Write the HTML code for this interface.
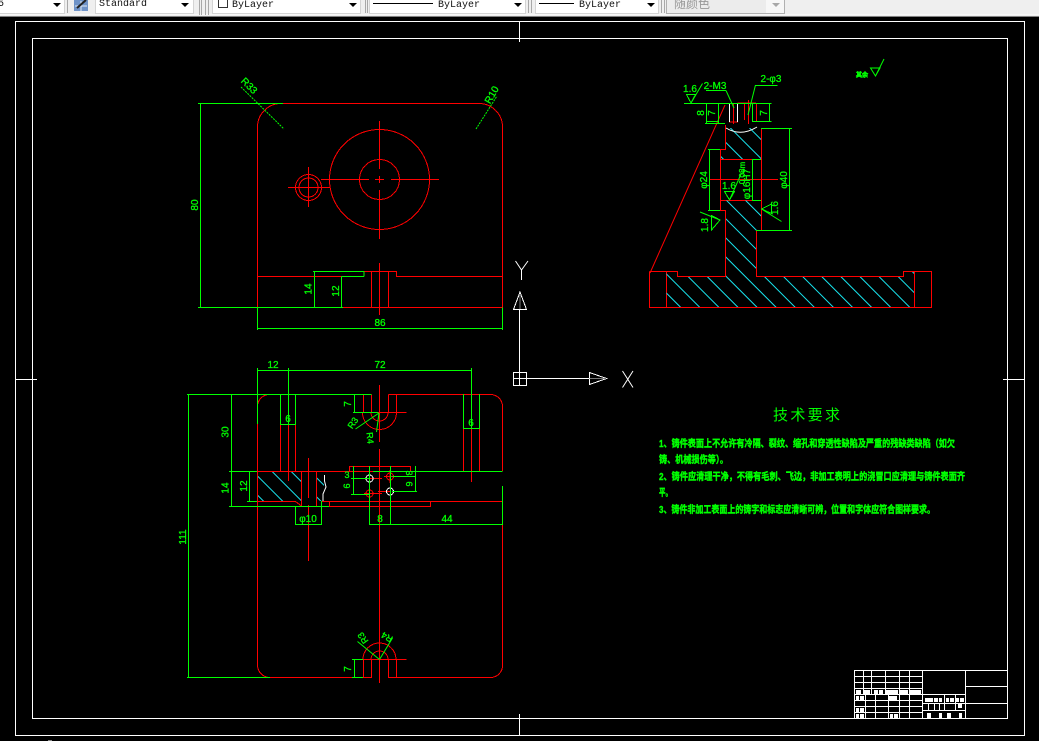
<!DOCTYPE html>
<html><head><meta charset="utf-8">
<style>
html,body{margin:0;padding:0;background:#000;width:1039px;height:741px;overflow:hidden}
svg{position:absolute;left:0;top:0}
</style></head><body>
<svg width="1039" height="741" viewBox="0 0 1039 741" xmlns="http://www.w3.org/2000/svg">
<defs>
<pattern id="h" width="13.5" height="13.5" patternUnits="userSpaceOnUse" patternTransform="rotate(45)">
<line x1="0" y1="6" x2="13.5" y2="6" stroke="#19e6f0" stroke-width="1"/>
</pattern>
</defs>
<!-- toolbar -->
<rect x="0" y="0" width="1039" height="17" fill="#efefef"/>
<rect x="0" y="14" width="1039" height="1" fill="#f7f7f7"/>
<rect x="0" y="16" width="1039" height="1" fill="#808080"/>
<g fill="#fff" stroke="#d4d4d4" shape-rendering="crispEdges">
<rect x="-2" y="-2" width="66.5" height="15.5"/>
<rect x="95.5" y="-2" width="98" height="15.5"/>
<rect x="212.5" y="-2" width="148" height="15.5"/>
<rect x="369.5" y="-2" width="156" height="15.5"/>
<rect x="535.5" y="-2" width="123" height="15.5"/>
<rect x="666.5" y="-2" width="118" height="15.5" fill="#ececec" stroke="#b0b0b0"/>
<rect x="766" y="-2" width="18" height="15" fill="#f7f7f7" stroke="none"/>
</g>
<g stroke="#a8a8a8" shape-rendering="crispEdges">
<path d="M67.5 0V13M199.5 0V15M201.5 0V15M205.5 0V15M208.5 0V15M365.5 0V13M367.5 0V13M528.5 0V13M531.5 0V13M661.5 0V13M664.5 0V13" fill="none"/>
</g>
<g fill="#000">
<path d="M53 3h8l-4 4zM181 3h8l-4 4zM349 3h8l-4 4zM514 3h8l-4 4zM647 3h8l-4 4z"/>
<path d="M772 3h8l-4 4z" fill="#a8a8a8"/>
</g>
<rect x="74" y="0" width="14" height="11" fill="#6f93c8"/>
<path d="M75 6h12M81 1v10" stroke="#dfe8f5" stroke-width="1"/>
<path d="M77 8L86 0" stroke="#222" stroke-width="2"/>
<rect x="218.5" y="-1" width="9" height="8.5" fill="#fff" stroke="#333" shape-rendering="crispEdges"/>
<path d="M373 3.5H433M539 3.5H574" stroke="#000" shape-rendering="crispEdges"/>
<g font-family="'Liberation Mono',monospace" font-size="10" fill="#111">
<text x="-2" y="6">5</text>
<text x="99" y="6">Standard</text>
<text x="232" y="7">ByLayer</text>
<text x="438" y="7">ByLayer</text>
<text x="579" y="7">ByLayer</text>
</g>
<text x="674" y="8" font-family="'Liberation Sans','Noto Sans CJK SC',sans-serif" font-size="12" fill="#999">随颜色</text>

<g fill="none" stroke-width="1" shape-rendering="crispEdges">
<!-- frames -->
<g stroke="#fff">
<path d="M15.5 21.5H1024.5V735.5H15.5Z"/>
<path d="M32.5 38.5H1007.5V718.5H32.5Z"/>
<path d="M519.5 21.5V42M519.5 714V735.5M15.5 379.5H37M1003 379.5H1024.5"/>
<!-- title block -->
<path d="M854.5 718.5V670.5H1007.5M922.5 670.5V718.5M965.5 670.5V718.5M965.5 686.5H1007.5M965.5 703.5H1007.5"/>
<path d="M854.5 676.5H922.5M854.5 682.5H922.5M854.5 688.5H922.5M854.5 694.5H965.5M854.5 700.5H922.5M854.5 706.5H922.5M854.5 712.5H922.5M922.5 703.5H965.5M922.5 710.5H965.5"/>
<path d="M863.5 670.5V694.5M871.5 670.5V694.5M885.5 670.5V694.5M899.5 670.5V718.5M909.5 670.5V718.5M865.5 694.5V718.5M875.5 694.5V718.5M888.5 694.5V718.5"/>
<path d="M944.5 694.5V710.5M955.5 694.5V710.5M928.5 703.5V710.5M934.5 703.5V710.5M939.5 703.5V710.5"/>
<!-- UCS -->
<path d="M513.5 372.5H526.5V385.5H513.5ZM519.5 372.5V385.5M513.5 378.5H589.5M519.5 372V309.5"/>
<path d="M513.5 309.5H526.5L520 292Z"/>
<path d="M589.5 372.5V384.5L606.5 378.5Z"/>
</g>
<path d="M515.5 261L521.5 270L528 261M521.5 270V280M622.5 371L633 387.5M633 371L622.5 387.5" stroke="#fff" shape-rendering="auto"/>
<path d="M589.5 378.5H606M520 295V309" stroke="#777"/>

<!-- TOP VIEW red -->
<g stroke="#f00">
<path d="M257.5 128V126.5A23.5 23.5 0 0 1 281 103.5H479A23.5 23.5 0 0 1 502.5 127V307.5H343M257.5 127V307.5"/>
<path d="M257.5 276.5H364M364 271.5H396.5V276.5H502.5M364 276.5V271.5"/>
<path d="M371.5 271.5V307.5M388.5 271.5V307.5M379.5 263V315"/>
<circle cx="379.5" cy="179.5" r="50"/>
<circle cx="379.5" cy="179.5" r="20"/>
<path d="M379.5 121V169M379.5 190V239M321 179.5H369M391 179.5H439M375 179.5H384M379.5 176V183"/>
<circle cx="308.5" cy="187.5" r="13"/>
<circle cx="308.5" cy="187.5" r="9.5"/>
<path d="M308.5 167V207M288 187.5H330"/>
<!-- SECTION red -->
<path d="M649.5 271.5H677.5V276.5H725.5V210.5H720.5V149.5H725.5V125M761.5 128V230.5H756.5V276.5H903.5V271.5H931.5V307.5H649.5V271.5M666.5 271.5V307.5M914.5 271.5V307.5"/>
<path d="M720.5 159.5H761.5M720.5 200.5H761.5M709 179.5H778"/>
<path d="M733.5 103V124M729.5 103V122M744.5 103V120M748.5 100V124M752.5 103V122M756.5 103V122M744.5 103H756M729 122H738M737.5 103H744.5"/>
<path d="M650 273L725 105" shape-rendering="auto"/>
<!-- BOTTOM VIEW red -->
<path d="M257.5 406A12 12 0 0 1 269.5 394.5M388.5 394.5H491A12 12 0 0 1 502.5 406V471M502.5 525V665.5A12 12 0 0 1 491 677.5H388.5V659.5M371.5 659.5V677.5H270A12.5 12.5 0 0 1 257.5 665V406"/>
<path d="M363.5 394.5V412.5M371.5 394.5V412.5M388.5 394.5V412.5M396.5 394.5V412.5M378 412.5H406.5"/>
<path d="M362.5 412.5A17 17 0 0 0 396.5 412.5M371 412.5A8.5 8.5 0 0 0 388 412.5"/>
<path d="M363.5 677.5V659.5M396.5 659.5V677.5H388.5M363.5 677.5H371.5M352 659.5H406.5"/>
<path d="M363 659.5A16.5 16.5 0 0 1 396 659.5M371 659.5A8.5 8.5 0 0 1 388 659.5"/>
<path d="M379.5 385V442M379.5 449V683M308.5 458V498M308.5 505V561"/>
<path d="M280.5 424V471M295.5 424V471M288.5 424V481M463.5 429V471M479.5 429V471M471.5 429V482"/>
<path d="M257.5 471.5H373M257.5 501.5H295.5L301.5 506M301.5 471.5V506M316.5 471.5V506M321.5 501.5H502.5M329.5 501V506.5H430.5V501"/>
<path d="M349.5 471V466.5H410.5V471"/>
<circle cx="390" cy="476.5" r="3.5"/><circle cx="369.5" cy="493.5" r="3.5"/>
<path d="M384 476.5H396M390 470V483M364 493.5H382M369.5 488V499M370 478.5H382M378 491.5H390"/>
</g>
<!-- hatch -->
<g stroke="none" shape-rendering="crispEdges">
<path fill="url(#h)" d="M666.5 272H677V277H726V200.5H761V230H756V277H903V272H914V307H666.5ZM721 150H726V128H761V159H721Z"/>
<path fill="url(#h)" d="M258 472H301V501H295L258 501ZM317 472H324V501H317Z"/>
</g>
<!-- white pieces -->
<g stroke="#fff">
<path d="M729.5 103V122M737.5 103V122"/>
<path d="M726 128Q741 137 757 127M324.5 475V481L326 487L323 494V501" shape-rendering="auto"/>
<circle cx="369.5" cy="478.5" r="3.5"/><circle cx="390" cy="491.5" r="3.5"/>
</g>
<!-- GREEN -->
<g stroke="#0f0">
<path d="M198 103.5H283M198 307.5H343M200.5 103.5V307.5M257.5 307.5V330M502.5 307.5V330M257.5 328.5H502.5M314.5 271.5V307.5M313 271.5H364M341.5 276.5V307.5M341.5 276.5H364M364 271.5V276.5"/>
<path d="M241 87L284 129M476 129L497 96" shape-rendering="auto" stroke-dasharray="2 1"/>
<!-- section -->
<path d="M684 103.5H771.5M706.5 103V123M718.5 103V123M705 123.5H725M706 121.5H718M752.5 103V122M769.5 103V122M752 121.5H771.5"/>
<path d="M706 90.5H726M755.5 85.5H777.5"/>
<path d="M709.5 149.5V210.5M708 149.5H720M708 210.5H720M789.5 128.5V230.5M761 128.5H792M756 230.5H792M752.5 159.5V200.5M752 159.5H761M752 200.5H761"/>
<path d="M686.5 94.5H695.5L691 103ZM724.5 191.5H734.5L729.5 200ZM771.5 204L761.5 209L771.5 213.5ZM720 220L711.5 215.5V230Z"/>
<g shape-rendering="auto">
<path d="M691 103L702.5 83.5M726 90.5L734 108M755.5 85L748 115M729.5 200L741.5 173M761.5 209L781.5 221.5M700 212L720 220"/>
</g>
<path d="M870.5 68H880L875.5 76ZM875.5 76L884 59" shape-rendering="auto"/>
<!-- bottom view dims -->
<path d="M257.5 368V424M257.5 370.5H471.5M288.5 368V424M471.5 368V429M280.5 394V424M295.5 394V424M280 424.5H296M463.5 394V429M479.5 394V429M463 428.5H480"/>
<path d="M187 394.5H371.5M188.5 394V677.5M187 677.5H270M231.5 394.5V506M229 471.5H257M373 471.5H502.5M229 506.5H329M249.5 471.5V501M247 501.5H257"/>
<path d="M354.5 394.5V412.5M353 412.5H378M354.5 659.5V677.5M352 659.5H363M352 677.5H363"/>
<path d="M295.5 506V525M321.5 501V525M295 524.5H322M369.5 466V525M390.5 466V525M369 524.5H502.5M502.5 486V525"/>
<path d="M353.5 466V495M351 478.5H369M351 494.5H369M415.5 466V491M392 476.5H416M392 491.5H417"/>
<g shape-rendering="auto">
<path d="M355.5 429L379 413M376.5 432L379 413M357.5 641.5L379.5 659.5M392.5 638L379.5 659.5"/>
</g>
</g>
</g>

<!-- dim text -->
<g fill="#0f0" stroke="#0f0" stroke-width=".3" font-family="'Liberation Sans',sans-serif" font-size="10" text-anchor="middle">
<text transform="translate(249 86) rotate(45)" y="3">R33</text>
<text transform="translate(492 95) rotate(-60)" y="3">R10</text>
<text transform="translate(195 205) rotate(-90)" y="3">80</text>
<text x="380" y="326">86</text>
<text transform="translate(308.5 289) rotate(-90)" y="3">14</text>
<text transform="translate(336 291) rotate(-90)" y="3">12</text>
<text x="690" y="92">1.6</text>
<text x="715" y="89">2-M3</text>
<text x="771" y="82">2-φ3</text>
<text transform="translate(712 113) rotate(-90)" y="3">7</text>
<text transform="translate(701 113) rotate(-90)" y="3">8</text>
<text transform="translate(764 113) rotate(-90)" y="3">7</text>
<text transform="translate(704 180) rotate(-90)" y="3">φ24</text>
<text transform="translate(784 180) rotate(-90)" y="3">φ40</text>
<text transform="translate(747 184) rotate(-90)" y="3">φ16H7</text>
<text transform="translate(742 173) rotate(-90)" y="3" font-size="8">0.08m</text>
<text x="729" y="189">1.6</text>
<text transform="translate(775 208) rotate(-90)" y="3">1.6</text>
<text transform="translate(705 225) rotate(-90)" y="3">1.8</text>
<text x="273" y="368">12</text>
<text x="380" y="368">72</text>
<text x="288" y="422">6</text>
<text x="471" y="426">6</text>
<text transform="translate(225.5 432) rotate(-90)" y="3">30</text>
<text transform="translate(225.5 488) rotate(-90)" y="3">14</text>
<text transform="translate(244 486) rotate(-90)" y="3">12</text>
<text transform="translate(183 537) rotate(-90)" y="3">111</text>
<text transform="translate(348 404) rotate(-90)" y="3">7</text>
<text transform="translate(348 669) rotate(-90)" y="3">7</text>
<text transform="translate(353 423) rotate(-55)" y="3" font-size="9">R3</text>
<text transform="translate(370 438) rotate(85)" y="3" font-size="9">R4</text>
<text transform="translate(363 638) rotate(-125)" y="3" font-size="9">R3</text>
<text transform="translate(387 637) rotate(-150)" y="3" font-size="9">R4</text>
<text x="308" y="522">φ10</text>
<text x="380" y="522">8</text>
<text x="447" y="522">44</text>
<text x="347" y="478" font-size="9">3</text>
<text transform="translate(347 486) rotate(-90)" y="3" font-size="9">6</text>
<text transform="translate(409 473) rotate(90)" y="3" font-size="9">3</text>
<text transform="translate(409 484) rotate(90)" y="3" font-size="9">6</text>
</g>
<text x="856" y="77" fill="#0f0" stroke="#0f0" stroke-width=".7" font-family="'Liberation Sans','Noto Sans CJK SC',sans-serif" font-size="6" textLength="12">其余</text>

<!-- tech requirements -->
<g fill="#0f0" font-family="'Liberation Sans','WenQuanYi Zen Hei','Noto Sans CJK SC',sans-serif">
<text x="773" y="420" font-size="15" textLength="67">技术要求</text>
<g font-size="10" font-weight="700" stroke="#0f0" stroke-width=".4" font-family="'Liberation Sans','Noto Sans CJK SC',sans-serif">
<text x="659" y="447" textLength="296" lengthAdjust="spacingAndGlyphs">1、铸件表面上不允许有冷隔、裂纹、缩孔和穿透性缺陷及严重的残缺类缺陷（如欠</text>
<text x="659" y="463" textLength="69" lengthAdjust="spacingAndGlyphs">铸、机械损伤等）。</text>
<text x="659" y="480" textLength="306" lengthAdjust="spacingAndGlyphs">2、铸件应清理干净，不得有毛刺、飞边，非加工表明上的浇冒口应清理与铸件表面齐</text>
<text x="659" y="496" textLength="13" lengthAdjust="spacingAndGlyphs">平。</text>
<text x="659" y="513" textLength="276" lengthAdjust="spacingAndGlyphs">3、铸件非加工表面上的铸字和标志应清晰可辨，位置和字体应符合图样要求。</text>
</g>
</g>

<!-- title block blobs -->
<g fill="#fff" shape-rendering="crispEdges">
<rect x="856" y="690" width="5" height="4"/><rect x="864" y="690" width="6" height="4"/><rect x="874" y="690" width="4" height="4"/><rect x="879" y="690" width="4" height="4"/><rect x="886" y="690" width="12" height="4"/><rect x="900" y="690" width="8" height="4"/><rect x="910" y="690" width="11" height="4"/>
<rect x="856" y="696" width="3" height="4"/><rect x="860" y="696" width="4" height="4"/><rect x="889" y="696" width="8" height="4"/>
<rect x="856" y="708" width="3" height="4"/><rect x="860" y="708" width="4" height="4"/><rect x="856" y="714" width="3" height="4"/><rect x="860" y="714" width="4" height="4"/><rect x="890" y="714" width="3" height="4"/><rect x="894" y="714" width="4" height="4"/>
<rect x="925" y="698" width="8" height="4"/><rect x="934" y="698" width="4" height="4"/><rect x="939" y="698" width="3" height="4"/><rect x="946" y="698" width="3" height="4"/><rect x="950" y="698" width="4" height="4"/><rect x="956" y="698" width="3" height="4"/><rect x="960" y="698" width="4" height="4"/>
<rect x="958" y="704" width="4" height="4"/><rect x="927" y="713" width="4" height="5"/><rect x="939" y="713" width="3" height="5"/><rect x="947" y="713" width="4" height="5"/><rect x="959" y="713" width="3" height="5"/>
</g>
<rect x="48" y="740" width="4" height="1" fill="#888"/>
</svg>
</body></html>
